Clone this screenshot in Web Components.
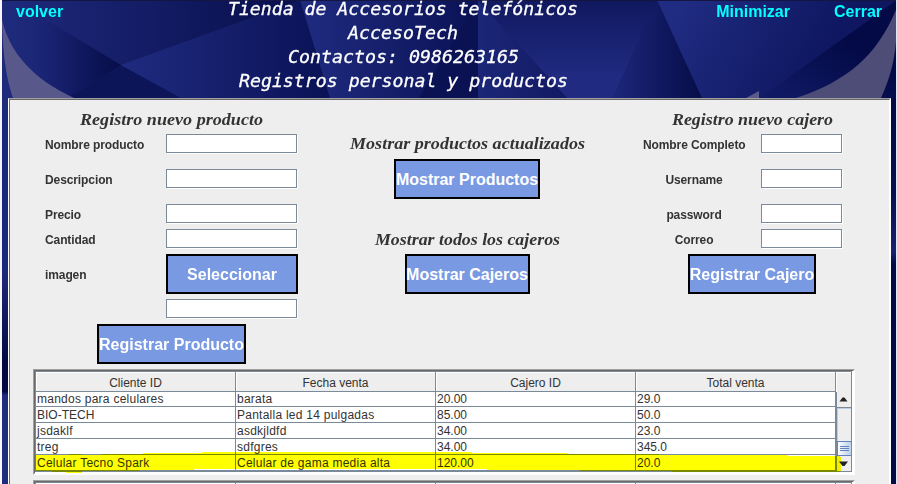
<!DOCTYPE html>
<html lang="es"><head><meta charset="utf-8"><title>AccesoTech</title>
<style>html,body{margin:0;height:100%;overflow:hidden;background:#fff}</style></head>
<body><store-app></store-app>
<script>
const define=(name,html)=>customElements.define(name,class extends HTMLElement{
  connectedCallback(){
    if(this.shadowRoot)return;
    const t=document.createElement('template');
    t.innerHTML=typeof html==='function'?html(this):html;
    this.attachShadow({mode:'open'}).append(t.content.cloneNode(true));
  }
});

// Faceted navy backdrop with two translucent swooshes
define('facet-backdrop',`<style>:host{display:block}svg{display:block;width:100%;height:100%}</style>
<svg viewBox="0 0 897 484" preserveAspectRatio="none">
<defs>
<linearGradient id="a"><stop offset="0" stop-color="#1e2a7c"/><stop offset=".45" stop-color="#141d66"/><stop offset="1" stop-color="#080f4c"/></linearGradient>
<linearGradient id="b"><stop offset="0" stop-color="#1c277a"/><stop offset="1" stop-color="#060d48"/></linearGradient>
<linearGradient id="c"><stop offset="0" stop-color="#1f2b80"/><stop offset="1" stop-color="#0a1255"/></linearGradient>
<linearGradient id="g"><stop offset="0" stop-color="#1b2678"/><stop offset="1" stop-color="#111a62"/></linearGradient>
<linearGradient id="d" x2="0" y2="1"><stop offset="0" stop-color="#10185e"/><stop offset=".75" stop-color="#1f2a80"/></linearGradient>
<linearGradient id="e" gradientUnits="userSpaceOnUse" x1="670" y1="20" x2="800" y2="95"><stop offset="0" stop-color="#202c82"/><stop offset="1" stop-color="#0e1760"/></linearGradient>
<linearGradient id="f" gradientUnits="userSpaceOnUse" x1="840" y1="35" x2="790" y2="105"><stop offset="0" stop-color="#030a46"/><stop offset="1" stop-color="#101a64"/></linearGradient>
<linearGradient id="l" x2="0" y2="1"><stop offset="0" stop-color="#1e2a7c"/><stop offset=".45" stop-color="#1e2a7c"/><stop offset=".68" stop-color="#030a42"/><stop offset="0.76" stop-color="#030a42"/><stop offset=".77" stop-color="#1f2b7c"/></linearGradient>
<linearGradient id="r" x2="0" y2="1"><stop offset="0" stop-color="#030a46"/><stop offset=".25" stop-color="#071050"/><stop offset=".4" stop-color="#18226f"/><stop offset=".43" stop-color="#030a46"/><stop offset="1" stop-color="#040b44"/></linearGradient>
</defs>
<rect x="0" width="897" height="484" fill="#0c145a"/>
<rect x="2" width="301" height="98" fill="url(#a)"/>
<path d="M33 12L121 65L67 98H40Z" fill="url(#b)"/>
<path d="M121 65L67 98H181Z" fill="#0d1559"/>
<path d="M121 65L300 0L330 98H181Z" fill="url(#c)"/>
<path d="M300 0H478V98H330Z" fill="url(#c)"/>
<path d="M478 0L419 98H478Z" fill="#0a1254"/>
<path d="M478 0L567 98H478Z" fill="url(#g)"/>
<path d="M478 0H657L613 98H567Z" fill="url(#d)"/>
<path d="M657 0L613 98H702Z" fill="url(#b)"/>
<path d="M657 0H897L765 98H702Z" fill="url(#e)"/>
<path d="M897 0V98H760Z" fill="url(#f)"/>
<path d="M2 20C10 53 33 79 74 98H13C7 80 3 60 2 20Z" fill="#58588b"/>
<path d="M896 10C877 55 848 81 796 98H881C889 80 894 64 896 42Z" fill="#4e4d78"/>
<path d="M746 98L759 91V98Z" fill="#59598a"/>
<rect x="2" y="98" width="6" height="386" fill="url(#l)"/><rect x="891" y="98" width="6" height="386" fill="url(#r)"/>
<rect width="897" height="1" fill="#141542"/><rect width="2" height="484" fill="#f7f7f9"/><rect x="896" width="1" height="484" fill="#e6e6ef"/>
</svg>`);

// One line of display text fitted to a given width
define('fit-text',el=>`<style>:host{display:block;line-height:0}svg{display:block;overflow:visible;margin:auto}
text{font:inherit;fill:currentColor;stroke:currentColor;stroke-width:var(--weight,0)}</style>
<svg width="${el.getAttribute('w')}" height="${el.getAttribute('h')}"><text x="0" y="${el.getAttribute('base')}" textLength="${el.getAttribute('w')}" lengthAdjust="spacingAndGlyphs">${el.textContent}</text></svg>`);

define('section-title',el=>`<style>:host{display:block;height:20px;color:#333;font:italic bold 16px "Liberation Serif",serif}</style>
<fit-text w="${el.getAttribute('w')}" h="20" base="16">${el.textContent}</fit-text>`);

define('text-field',`<style>:host{display:block;height:20px}div{box-sizing:border-box;height:19px;margin-right:1px;border:1px solid #7a8a99;background:#fff;box-shadow:1px 1px 0 #fff}</style><div></div>`);
define('field-label',`<style>:host{display:block;font:bold 12px/22px "Liberation Sans",Arial,sans-serif;letter-spacing:-.1px;color:#333;white-space:nowrap}</style><slot></slot>`);
define('action-button',`<style>:host{display:flex;box-sizing:border-box;height:40px;padding-top:2px;border:2px solid #000;background:#7999e2;color:#fff;font:bold 16px "Liberation Sans",Arial,sans-serif;align-items:center;justify-content:center;white-space:nowrap}</style><slot></slot>`);
define('nav-link',`<style>:host{display:block;font:bold 16px/24px "Liberation Sans",Arial,sans-serif;color:#0ff}</style><slot></slot>`);

define('app-header',`<style>
:host{display:grid;grid-template-columns:228px 350px 1fr;height:98px;box-sizing:border-box}
.l{padding-left:16px}.r{display:flex;justify-content:flex-end;gap:44px;padding-right:15px}
.c{color:#fff;font:italic 17.8px "DejaVu Sans Mono",monospace;--weight:.3px}
</style>
<nav-link class="l">volver</nav-link>
<div class="c"><fit-text w="350" h="24" base="15">Tienda de Accesorios telefónicos</fit-text><fit-text w="110" h="24" base="15">AccesoTech</fit-text><fit-text w="231" h="24" base="15">Contactos: 0986263165</fit-text><fit-text w="329" h="24" base="15">Registros personal y productos</fit-text></div>
<div class="r"><nav-link>Minimizar</nav-link><nav-link>Cerrar</nav-link></div>`);

define('product-form',`<style>:host{display:block;width:253px}
.g{display:grid;grid-template-columns:121px 132px;grid-template-rows:35px 35px 25px 25px 45px 25px 40px;padding-top:5px}
.g field-label.tall{line-height:42px}.all{grid-column:1/-1;justify-self:center;width:149px}.empty{grid-column:2}</style>
<section-title w="183">Registro nuevo producto</section-title>
<div class="g">
<field-label>Nombre producto</field-label><text-field></text-field>
<field-label>Descripcion</field-label><text-field></text-field>
<field-label>Precio</field-label><text-field></text-field>
<field-label>Cantidad</field-label><text-field></text-field>
<field-label class="tall">imagen</field-label><action-button>Seleccionar</action-button>
<text-field class="empty"></text-field>
<action-button class="all">Registrar Producto</action-button></div>`);

define('list-actions',`<style>:host{display:flex;flex-direction:column;align-items:center;width:236px;padding-top:24px}
.p{width:146px;margin:6px 0 30px}.j{width:125px;margin-top:5px}</style>
<section-title w="235">Mostrar productos actualizados</section-title>
<action-button class="p">Mostrar Productos</action-button>
<section-title w="185">Mostrar todos los cajeros</section-title>
<action-button class="j">Mostrar Cajeros</action-button>`);

define('cashier-form',`<style>:host{display:block;width:218px}
.g{display:grid;grid-template-columns:102px 82px;column-gap:16px;grid-template-rows:35px 35px 25px 25px 40px;padding-top:5px}
field-label{text-align:center}.b{width:128px;margin-left:45px}</style>
<section-title w="161">Registro nuevo cajero</section-title>
<div class="g">
<field-label>Nombre Completo</field-label><text-field></text-field>
<field-label>Username</field-label><text-field></text-field>
<field-label>password</field-label><text-field></text-field>
<field-label>Correo</field-label><text-field></text-field>
<action-button class="b">Registrar Cajero</action-button></div>`);

define('scroll-bar',`<style>:host{display:flex;flex-direction:column;box-sizing:border-box;width:15px;border-left:1px solid #7a8a99;background:#eee}
svg{display:block;width:14px;height:79px}</style>
<svg viewBox="0 0 14 79"><path d="M0 15.5H14" stroke="#7a8a99"/><path d="M.5 16V49M0 16.5H14" stroke="#b8cfe5" fill="none"/>
<path d="M2.500 9.500H10.500L7.500 5.500H5.500Z" fill="#222"/>
<defs><linearGradient id="t"><stop offset="0" stop-color="#fff"/><stop offset="1" stop-color="#b8cfe5"/></linearGradient></defs>
<rect x=".5" y="49.5" width="14" height="14" fill="url(#t)" stroke="#6382bf"/><path d="M3 54.5H12M3 56.5H12M3 58.5H12" stroke="#6382bf"/>
<path d="M2 69.500H11L7.500 74H5.500Z" fill="#222"/></svg>`);

define('sales-table',el=>{
 const rows=JSON.parse(el.getAttribute('rows')||'[]');
 const heads=rows.length?['Cliente ID','Fecha venta','Cajero ID','Total venta']:['','','',''];
 return `<style>
:host{display:block;position:relative;box-sizing:border-box;width:822px;height:106px;border:1px solid;border-color:#a0a0a0 #fff #fff #a0a0a0;font:12px/15px "Liberation Sans",Arial,sans-serif;color:#333}
.in{box-sizing:border-box;height:104px;border:1px solid;border-color:#696969 #fff #fff #696969;background:#fff}
.view{box-sizing:border-box;width:817px;height:101px;border:1px solid #7a8a99;background:#fff}
.head,.row{display:grid;grid-template-columns:200px 200px 200px 200px 15px}
.head span{box-sizing:border-box;height:20px;border:solid #7a8a99;border-width:0 1px 1px 0;background:#eee;box-shadow:inset 1px 1px 0 #fff;text-align:center;line-height:23px}
.head span:last-child{border:0}
.body{display:grid;grid-template-columns:800px 15px}.row{grid-template-columns:repeat(4,200px)}
.row span{box-sizing:border-box;height:16px;padding-left:1px;border:solid #7a8a99;border-width:0 1px 1px 0;white-space:nowrap;line-height:17px}
.row:first-child span{height:15px;line-height:15px}
.row span.wide{letter-spacing:.25px}
.mark{position:absolute;left:1px;top:81px;width:812px;height:24px;mix-blend-mode:multiply}
</style><div class="in"><div class="view"><div class="head">${heads.map(h=>`<span>${h}</span>`).join('')}<span></span></div>
${rows.length?`<div class="body"><div>${rows.map(r=>`<div class="row">${r.map(c=>`<span${/[a-z]/.test(c)?' class="wide"':''}>${c}</span>`).join('')}</div>`).join('')}</div><scroll-bar></scroll-bar></div>`:''}</div></div>
${rows.length?`<svg class="mark" viewBox="35 451 812 24" shape-rendering="crispEdges"><path fill="#ff0" d="M35 455H69V454H82V455H102V454H143V453H202V452H472V453H568V454H659V455H787V456H840V457H841V471H840V472H672V471H580V470H487V469H194V470H140V471H82V473H66V472H52V471H35Z"/></svg>`:''}`;
});

define('main-panel',`<style>
:host{display:block;box-sizing:border-box;width:883px;height:386px;overflow:hidden;border:solid;border-width:1px 1px 0;border-color:#a0a0a0 #fff;background:#eee}
.in{box-sizing:border-box;height:100%;border:solid;border-width:1px 1px 0;border-color:#696969 #fff #eee #696969}
.forms{display:flex;height:269px;box-sizing:border-box;padding:9px 0 0 35px}
list-actions{margin-left:51px;margin-right:58px;height:190px}
.tables{display:grid;gap:5px;padding-left:23px}
</style><div class="in"><div class="forms"><product-form></product-form><list-actions></list-actions><cashier-form></cashier-form></div>
<div class="tables"><sales-table rows='[["mandos para celulares","barata","20.00","29.0"],["BIO-TECH","Pantalla led 14 pulgadas","85.00","50.0"],["jsdaklf","asdkjldfd","34.00","23.0"],["treg","sdfgres","34.00","345.0"],["Celular Tecno Spark","Celular de gama media alta","120.00","20.0"]]'></sales-table><sales-table></sales-table></div></div>`);

define('store-app',`<style>:host{display:grid;width:897px;height:484px;overflow:hidden}
facet-backdrop,.page{grid-area:1/1;min-width:0;min-height:0}.page{z-index:1;height:484px}main-panel{margin-left:8px}</style>
<facet-backdrop></facet-backdrop><div class="page"><app-header></app-header><main-panel></main-panel></div>`);
</script></body></html>
